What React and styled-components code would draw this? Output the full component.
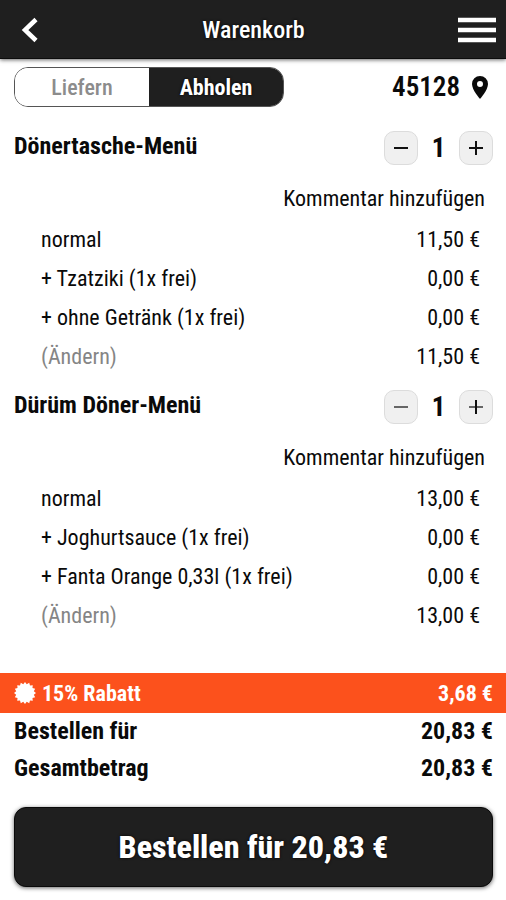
import React, { useState } from "react";
import styled, { createGlobalStyle } from "styled-components";

const GlobalStyle = createGlobalStyle`
  *, *::before, *::after { box-sizing: border-box; }
  body { margin: 0; background: #fff; color: #0a0a0a; }
  body, button { font-family: "Roboto Condensed", Roboto, sans-serif; }
  button { margin: 0; padding: 0; border: 0; background: none; color: inherit; cursor: pointer; }
  h1, h2, ul { margin: 0; padding: 0; }
`;

const Page = styled.div`
  min-height: 100vh;
  display: flex;
  flex-direction: column;
`;

const Header = styled.header`
  display: grid;
  grid-template-columns: 40px 1fr 40px;
  align-items: center;
  height: 59px;
  padding: 2px 9px 0 10px;
  background: #1f1f1f;
  color: #fff;
  border-bottom: 1px solid #0c0c0c;
  box-shadow: 0 1px 4px rgba(0, 0, 0, 0.6);
`;

const HeaderTitle = styled.h1`
  text-align: center;
  font-size: 24px;
  font-weight: 500;
  line-height: 32px;
  text-shadow: 0 0 3px #000;
`;

const IconButton = styled.button`
  display: flex;
  align-items: center;
  justify-content: center;
  height: 40px;
`;

const OrderBar = styled.div`
  display: flex;
  align-items: center;
  justify-content: space-between;
  padding: 8px 14px 10px;
`;

const Toggle = styled.div`
  display: flex;
  width: 270px;
  height: 40px;
  border: 1px solid #555;
  border-radius: 14px;
  overflow: hidden;
`;

const ToggleOption = styled.button`
  flex: 1;
  font-size: 22px;
  font-weight: ${(p) => (p.$active ? 700 : 500)};
  color: ${(p) => (p.$active ? "#fff" : "#8c8c8c")};
  background: ${(p) => (p.$active ? "#1f1f1f" : "#fff")};
  text-shadow: ${(p) => (p.$active ? "0 0 3px #000" : "none")};
`;

const Location = styled.button`
  display: flex;
  align-items: center;
  gap: 12px;
  padding-right: 4px;
  font-size: 27px;
  font-weight: 600;
  line-height: 32px;
`;

const ItemHead = styled.div`
  display: flex;
  align-items: center;
  justify-content: space-between;
  height: 61px;
  padding: 0 13px 0 14px;
`;

const ItemTitle = styled.h2`
  font-size: 24px;
  font-weight: 700;
  line-height: 28px;
  padding-bottom: 4px;
`;

const Stepper = styled.div`
  display: grid;
  grid-template-columns: 34px 41px 34px;
  align-items: center;
  justify-items: center;
`;

const StepButton = styled.button`
  display: flex;
  align-items: center;
  justify-content: center;
  width: 34px;
  height: 34px;
  border: 1px solid #dcdcdc;
  border-radius: 10px;
  background: #f0f0f0;
`;

const Count = styled.span`
  font-size: 27px;
  font-weight: 700;
  line-height: 34px;
`;

const CommentRow = styled.div`
  display: flex;
  justify-content: flex-end;
  align-items: center;
  height: 42px;
  padding-right: 21px;
`;

const CommentButton = styled.button`
  font-size: 22px;
  line-height: 28px;
`;

const Lines = styled.ul`
  list-style: none;
`;

const Line = styled.li`
  display: flex;
  align-items: center;
  justify-content: space-between;
  height: 39px;
  padding: 0 26px 0 41px;
  font-size: 22px;
  line-height: 28px;
`;

const ChangeButton = styled.button`
  font-size: 22px;
  color: #858585;
`;

const Summary = styled.footer`
  margin-top: auto;
  padding-top: 38px;
`;

const Discount = styled.div`
  display: flex;
  align-items: center;
  justify-content: space-between;
  height: 40px;
  padding: 0 13px 0 14px;
  background: #fc511c;
  color: #fff;
  font-size: 22px;
  font-weight: 700;
`;

const DiscountLabel = styled.span`
  display: flex;
  align-items: center;
  gap: 6px;
`;

const TotalRow = styled.div`
  display: flex;
  justify-content: space-between;
  padding: 0 13px 0 14px;
  font-size: 24px;
  font-weight: 700;
  line-height: 37px;
`;

const OrderButton = styled.button`
  display: block;
  width: calc(100% - 27px);
  height: 80px;
  margin: 20px 13px 13px 14px;
  border: 1px solid #0a0a0a;
  border-radius: 12px;
  background: #1f1f1f;
  color: #fff;
  font-size: 32px;
  font-weight: 800;
  text-shadow: 0 0 3px #000;
  box-shadow: 0 1px 4px rgba(0, 0, 0, 0.6);
`;

const items = [
  {
    name: "Dönertasche-Menü",
    total: "11,50 €",
    lines: [["normal", "11,50 €"], ["+ Tzatziki (1x frei)", "0,00 €"], ["+ ohne Getränk (1x frei)", "0,00 €"]],
  },
  {
    name: "Dürüm Döner-Menü",
    total: "13,00 €",
    lines: [["normal", "13,00 €"], ["+ Joghurtsauce (1x frei)", "0,00 €"], ["+ Fanta Orange 0,33l (1x frei)", "0,00 €"]],
  },
];

const sealPoints = Array.from({ length: 32 }, (_, i) => {
  const r = i % 2 ? 9 : 11;
  const a = (i * Math.PI) / 16;
  return `${(11 + r * Math.sin(a)).toFixed(2)},${(11 - r * Math.cos(a)).toFixed(2)}`;
}).join(" ");

const SealIcon = () => (
  <svg width="22" height="22" viewBox="0 0 22 22" aria-hidden="true">
    <polygon points={sealPoints} fill="#fff" />
  </svg>
);

const BackIcon = () => (
  <svg width="18" height="26" viewBox="0 0 18 26" aria-hidden="true">
    <path d="M15 2.5L4 13l11 10.5" fill="none" stroke="#fff" strokeWidth="4.5" />
  </svg>
);

const MenuIcon = () => (
  <svg width="40" height="28" viewBox="0 0 40 28" aria-hidden="true">
    <path d="M1 4h38M1 14h38M1 24h38" stroke="#fff" strokeWidth="4.5" />
  </svg>
);

const PinIcon = () => (
  <svg width="16" height="23" viewBox="0 0 16 23" aria-hidden="true">
    <path
      fillRule="evenodd"
      fill="#0a0a0a"
      d="M8 0a8 8 0 0 0-8 8c0 6 8 15 8 15s8-9 8-15a8 8 0 0 0-8-8zm0 5a3 3 0 1 1 0 6 3 3 0 0 1 0-6z"
    />
  </svg>
);

const StepIcon = ({ plus, muted }) => (
  <svg width="16" height="16" viewBox="0 0 16 16" aria-hidden="true">
    <path d="M1 8h14" stroke={muted ? "#666" : "#111"} strokeWidth="2" />
    {plus && <path d="M8 1v14" stroke="#111" strokeWidth="2" />}
  </svg>
);

function CartItem({ item, muted }) {
  const [count, setCount] = useState(1);
  return (
    <section>
      <ItemHead>
        <ItemTitle>{item.name}</ItemTitle>
        <Stepper>
          <StepButton aria-label="Weniger" onClick={() => setCount(Math.max(1, count - 1))}>
            <StepIcon muted={muted} />
          </StepButton>
          <Count>{count}</Count>
          <StepButton aria-label="Mehr" onClick={() => setCount(count + 1)}>
            <StepIcon plus muted={muted} />
          </StepButton>
        </Stepper>
      </ItemHead>
      <CommentRow>
        <CommentButton>Kommentar hinzufügen</CommentButton>
      </CommentRow>
      <Lines>
        {item.lines.map(([label, price]) => (
          <Line key={label}>
            <span>{label}</span>
            <span>{price}</span>
          </Line>
        ))}
        <Line>
          <ChangeButton>(Ändern)</ChangeButton>
          <span>{item.total}</span>
        </Line>
      </Lines>
    </section>
  );
}

export default function App() {
  const [mode, setMode] = useState("Abholen");
  return (
    <Page>
      <GlobalStyle />
      <Header>
        <IconButton aria-label="Zurück"><BackIcon /></IconButton>
        <HeaderTitle>Warenkorb</HeaderTitle>
        <IconButton aria-label="Menü"><MenuIcon /></IconButton>
      </Header>
      <main>
        <OrderBar>
          <Toggle>
            {["Liefern", "Abholen"].map((m) => (
              <ToggleOption key={m} $active={mode === m} aria-pressed={mode === m} onClick={() => setMode(m)}>
                {m}
              </ToggleOption>
            ))}
          </Toggle>
          <Location>45128 <PinIcon /></Location>
        </OrderBar>
        {items.map((item, i) => (
          <CartItem key={item.name} item={item} muted={i === 1} />
        ))}
      </main>
      <Summary>
        <Discount>
          <DiscountLabel><SealIcon />15% Rabatt</DiscountLabel>
          <span>3,68 €</span>
        </Discount>
        <TotalRow><span>Bestellen für</span><span>20,83 €</span></TotalRow>
        <TotalRow><span>Gesamtbetrag</span><span>20,83 €</span></TotalRow>
        <OrderButton>Bestellen für 20,83 €</OrderButton>
      </Summary>
    </Page>
  );
}
